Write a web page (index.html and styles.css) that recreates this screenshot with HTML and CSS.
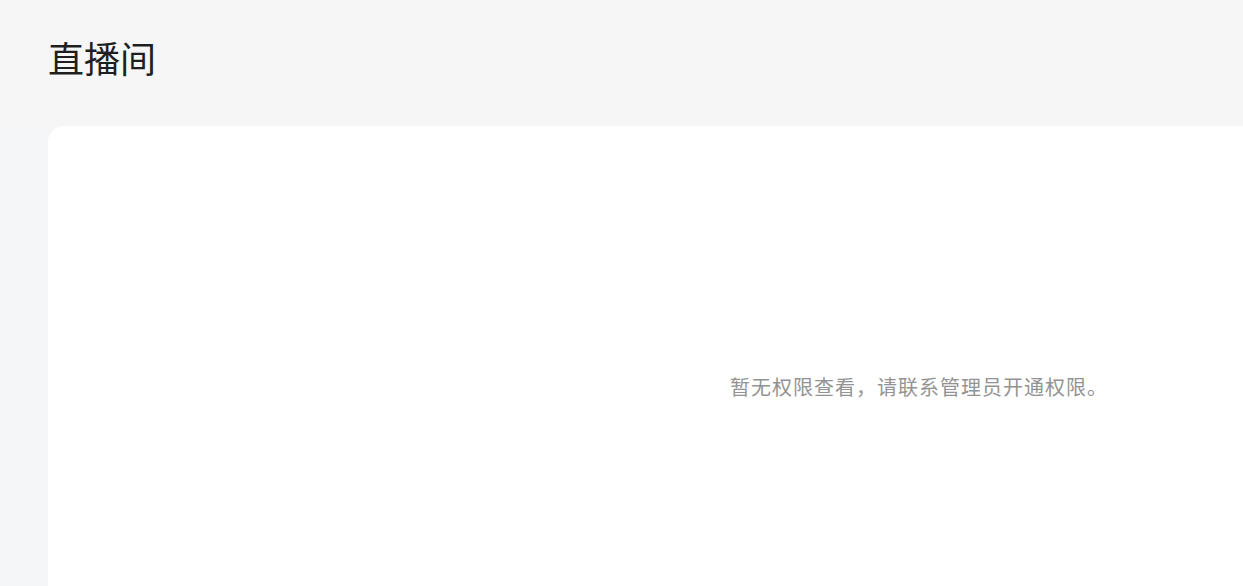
FILE: index.html
```html
<!DOCTYPE html>
<html lang="zh-CN">
<head>
<meta charset="utf-8">
<title>直播间</title>
<link rel="stylesheet" href="styles.css">
</head>
<body>
<div class="page">
  <header class="header">
    <h1 class="title">直播间</h1>
  </header>
  <main class="main">
    <section class="card">
      <p class="empty">暂无权限查看，请联系管理员开通权限。</p>
    </section>
  </main>
</div>
</body>
</html>
```

FILE: styles.css
```css
html, body {
  margin: 0;
  padding: 0;
  overflow: hidden;
  background: #f5f6f8;
  font-family: "Noto Sans CJK SC", "Noto Sans", "Liberation Sans", sans-serif;
}

.page {
  display: flex;
  flex-direction: column;
  width: 1790px;
}

.header {
  background: #f6f6f6;
  height: 126px;
  padding-left: 48px;
  box-sizing: border-box;
}

.title {
  margin: 0;
  padding-top: 31px;
  font-size: 36px;
  font-weight: 400;
  line-height: 52px;
  color: #1f1f1f;
}

.main {
  padding-left: 48px;
  background: #f5f6f8;
}

.card {
  background: #ffffff;
  border-radius: 16px 16px 0 0;
  height: 522px;
  display: flex;
  align-items: center;
  justify-content: center;
}

.empty {
  margin: 0;
  font-size: 20px;
  line-height: 28px;
  color: #939393;
  letter-spacing: 1px;
}
```
